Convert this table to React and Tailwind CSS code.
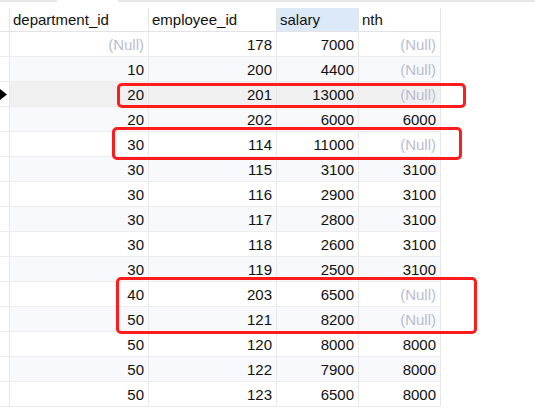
import React from "react";

const N = null;
const rows = [
  [N, 178, 7000, N],
  [10, 200, 4400, N],
  [20, 201, 13000, N],
  [20, 202, 6000, 6000],
  [30, 114, 11000, N],
  [30, 115, 3100, 3100],
  [30, 116, 2900, 3100],
  [30, 117, 2800, 3100],
  [30, 118, 2600, 3100],
  [30, 119, 2500, 3100],
  [40, 203, 6500, N],
  [50, 121, 8200, N],
  [50, 120, 8000, 8000],
  [50, 122, 7900, 8000],
  [50, 123, 6500, 8000],
];

const widths = ["w-[139px]", "w-[128px]", "w-[82px]", "w-[82px]"];

function Cell({ v, i }) {
  return (
    <div
      className={`${widths[i]} h-full shrink-0 border-r border-[#e8e8e8] flex items-center justify-end pr-[4px]`}
    >
      {v === null ? (
        <span className="text-[#b9bdd0]">(Null)</span>
      ) : (
        <span className="text-[#111111]">{v}</span>
      )}
    </div>
  );
}

export default function App() {
  return (
    <div
      className="relative w-[535px] h-[410px] bg-white overflow-hidden text-[15px] leading-none"
      style={{ fontFamily: '"Liberation Sans", Arial, sans-serif' }}
    >
      <div className="flex h-[2px]">
        <div className="w-[57px] bg-[#e6e6e6]" />
        <div className="w-[61px] bg-white" />
        <div className="flex-1 bg-[#e6e6e6]" />
      </div>
      <div className="h-[6px]" />
      {/* header */}
      <div className="flex h-[24px] border-b border-[#e3e3e3] w-[441px]">
        <div className="w-[10px] h-full shrink-0 border-r border-[#e6e6e6]" />
        <div className="w-[139px] h-full shrink-0 border-r border-[#e6e6e6] flex items-center pl-[3px] text-[#111111]">
          department_id
        </div>
        <div className="w-[128px] h-full shrink-0 border-r border-[#e6e6e6] flex items-center pl-[3px] text-[#111111]">
          employee_id
        </div>
        <div className="w-[82px] h-full shrink-0 border-r border-[#e6e6e6] flex items-center pl-[3px] bg-[#dbe9f8] text-[#111111]">
          salary
        </div>
        <div className="w-[82px] h-full shrink-0 border-r border-[#e6e6e6] flex items-center pl-[3px] text-[#111111]">
          nth
        </div>
      </div>
      {rows.map((r, idx) => {
        const bg =
          idx === 2
            ? "bg-[#f0f0f0]"
            : idx % 2 === 1
            ? "bg-[#f7f9fc]"
            : "bg-white";
        return (
          <div key={idx} className="flex h-[25px] w-[441px] border-b border-[#ededed]">
            <div className="w-[10px] h-full shrink-0 border-r border-[#e6e6e6] bg-white flex items-center">
              {idx === 2 && (
                <svg width="7" height="11" viewBox="0 0 7 11">
                  <path d="M0 0 L7 5.5 L0 11 Z" fill="#000" />
                </svg>
              )}
            </div>
            <div className={`flex h-full ${bg}`}>
              {r.map((v, i) => (
                <Cell key={i} v={v} i={i} />
              ))}
            </div>
          </div>
        );
      })}
      {/* red highlight boxes */}
      <div className="absolute left-[117px] top-[83px] w-[349px] h-[25px] border-[3px] border-[#ff1c1c] rounded-[5px]" />
      <div className="absolute left-[112px] top-[127px] w-[350px] h-[33px] border-[3px] border-[#ff1c1c] rounded-[5px]" />
      <div className="absolute left-[116px] top-[277px] w-[361px] h-[57px] border-[3px] border-[#ff1c1c] rounded-[5px]" />
    </div>
  );
}
